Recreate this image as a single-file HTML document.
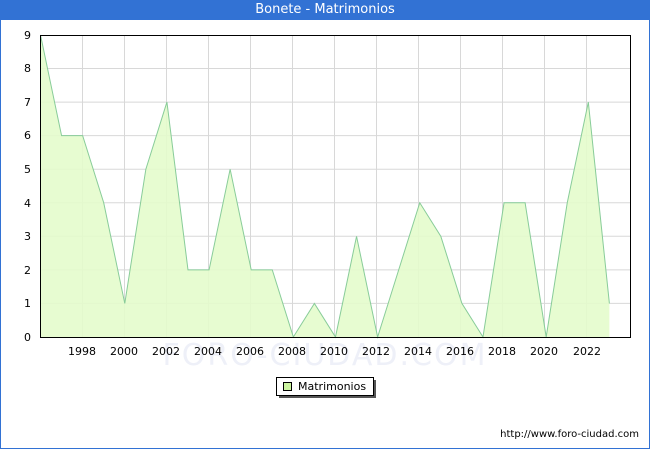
<!DOCTYPE html>
<html><head><style>
body{margin:0;background:#fff;}
.wrap{position:relative;width:648px;height:448px;border:1px solid #3272d4;border-top:none;background:#fff;overflow:hidden}
.title{height:20px;background:#3272d4;color:#fff;font:13px "DejaVu Sans",sans-serif;text-align:center;line-height:20px}
svg{position:absolute;left:-1px;top:0}
text{font-family:"DejaVu Sans",sans-serif;font-size:11px;fill:#000}
</style></head><body>
<div class="wrap"><div class="title">Bonete - Matrimonios</div>
<svg width="650" height="450">
<text x="325" y="365" text-anchor="middle" style="font-size:30px;fill:#eef0f8;letter-spacing:2px">FORO-CIUDAD.COM</text>
<g stroke="#d8d8d8" stroke-width="1">
<line x1="40" x2="630" y1="303.4" y2="303.4"/><line x1="40" x2="630" y1="269.9" y2="269.9"/><line x1="40" x2="630" y1="236.3" y2="236.3"/><line x1="40" x2="630" y1="202.8" y2="202.8"/><line x1="40" x2="630" y1="169.2" y2="169.2"/><line x1="40" x2="630" y1="135.6" y2="135.6"/><line x1="40" x2="630" y1="102.1" y2="102.1"/><line x1="40" x2="630" y1="68.5" y2="68.5"/>
<line y1="35" y2="337" x1="82.5" x2="82.5"/><line y1="35" y2="337" x1="124.5" x2="124.5"/><line y1="35" y2="337" x1="166.5" x2="166.5"/><line y1="35" y2="337" x1="208.5" x2="208.5"/><line y1="35" y2="337" x1="250.5" x2="250.5"/><line y1="35" y2="337" x1="292.5" x2="292.5"/><line y1="35" y2="337" x1="334.5" x2="334.5"/><line y1="35" y2="337" x1="376.5" x2="376.5"/><line y1="35" y2="337" x1="418.5" x2="418.5"/><line y1="35" y2="337" x1="460.5" x2="460.5"/><line y1="35" y2="337" x1="502.5" x2="502.5"/><line y1="35" y2="337" x1="544.5" x2="544.5"/><line y1="35" y2="337" x1="586.5" x2="586.5"/>
</g>
<g transform="translate(40.5,337) scale(21.07,-33.56)">
<polygon fill="#e4fccc" fill-opacity="0.9" points="0,0 0,9 1,6 2,6 3,4 4,1 5,5 6,7 7,2 8,2 9,5 10,2 11,2 12,0 13,1 14,0 15,3 16,0 17,2 18,4 19,3 20,1 21,0 22,4 23,4 24,0 25,4 26,7 27,1 27,0"/>
<polyline fill="none" stroke="#88cc99" stroke-width="1" vector-effect="non-scaling-stroke" points="0,9 1,6 2,6 3,4 4,1 5,5 6,7 7,2 8,2 9,5 10,2 11,2 12,0 13,1 14,0 15,3 16,0 17,2 18,4 19,3 20,1 21,0 22,4 23,4 24,0 25,4 26,7 27,1"/>
</g>
<rect x="40.5" y="35.5" width="590" height="302" fill="none" stroke="#000" stroke-width="1"/>
<g text-anchor="end">
<text x="31" y="341">0</text><text x="31" y="307">1</text><text x="31" y="274">2</text><text x="31" y="240">3</text><text x="31" y="207">4</text><text x="31" y="173">5</text><text x="31" y="139">6</text><text x="31" y="106">7</text><text x="31" y="72">8</text><text x="31" y="39">9</text>
</g>
<g text-anchor="middle">
<text x="82" y="355">1998</text><text x="124" y="355">2000</text><text x="166" y="355">2002</text><text x="208" y="355">2004</text><text x="250" y="355">2006</text><text x="292" y="355">2008</text><text x="334" y="355">2010</text><text x="376" y="355">2012</text><text x="418" y="355">2014</text><text x="460" y="355">2016</text><text x="502" y="355">2018</text><text x="544" y="355">2020</text><text x="587" y="355">2022</text>
</g>
<rect x="279" y="380" width="97" height="18" fill="#555"/>
<rect x="276.5" y="377.5" width="97" height="18" fill="#fff" stroke="#000"/>
<rect x="283.5" y="382.5" width="8" height="8" fill="#ccf5a0" stroke="#000"/>
<text x="298" y="390" style="font-size:11px">Matrimonios</text>
<text x="639" y="437" text-anchor="end" style="font-size:10px">http://www.foro-ciudad.com</text>
</svg></div>
</body></html>
